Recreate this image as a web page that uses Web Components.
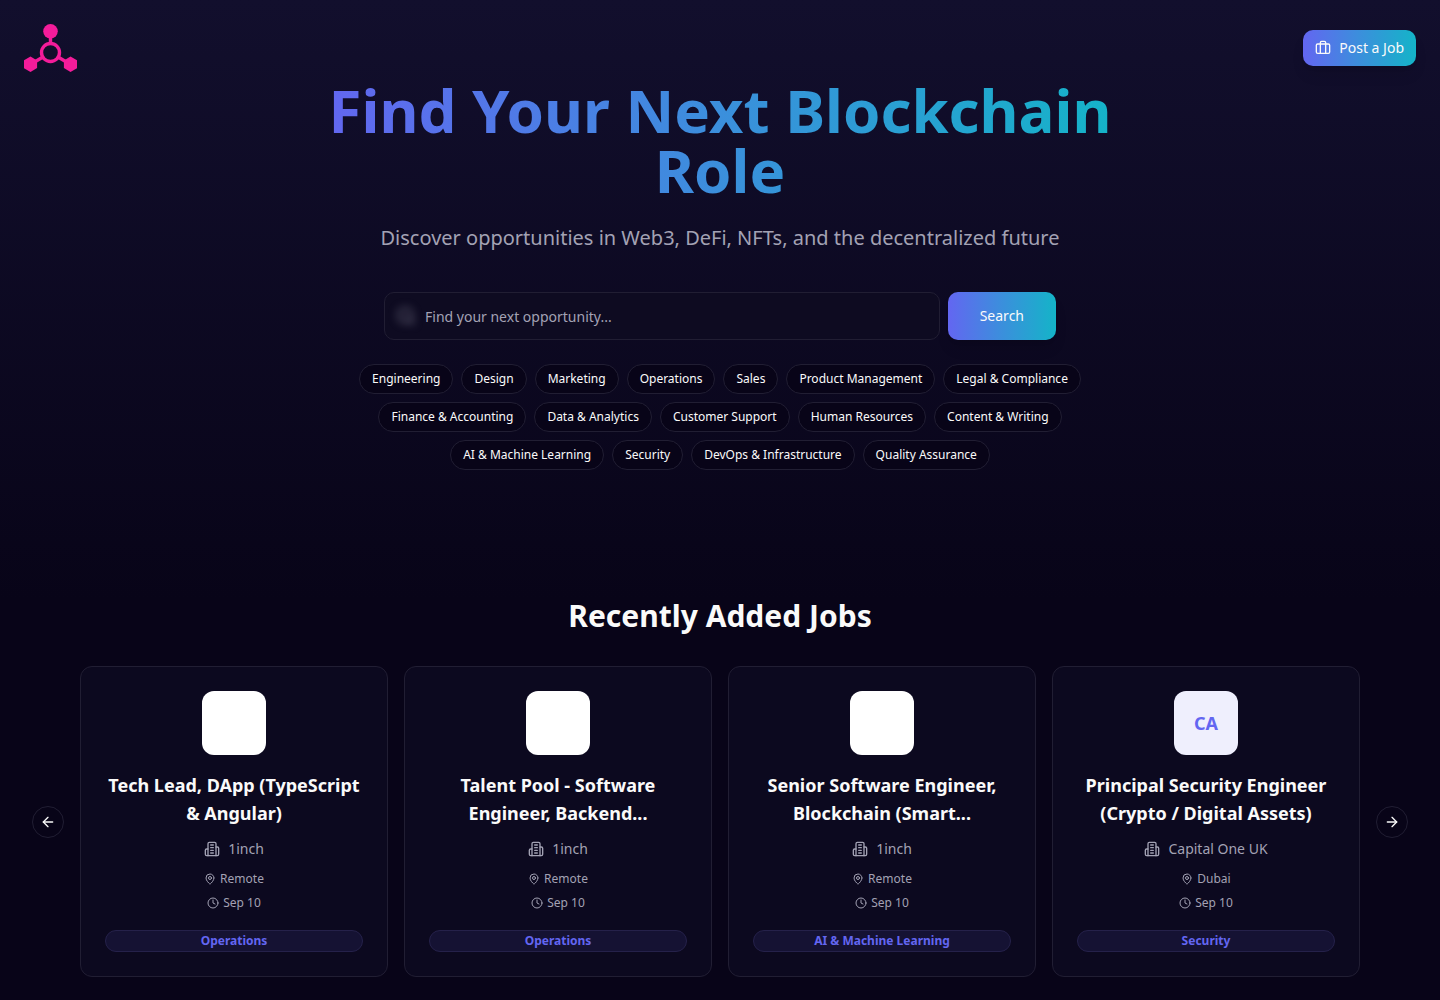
<!DOCTYPE html>
<html lang="en">
<head>
<meta charset="utf-8">
<meta name="viewport" content="width=device-width, initial-scale=1">
<title>Blockchain Jobs</title>
<style>
	:root {
		--bg: #080418;
		--bg-top: #120f2d;
		--card: #0c091f;
		--border: #211e33;
		--text: #fafafa;
		--muted: #a3a2b4;
		--primary: #6366f1;
		--gradient: linear-gradient(to right, #6366f1, #3b8fdc 50%, #14b4c8);
	}
	body {
		margin: 0;
		min-height: 100vh;
		color: var(--text);
		background: linear-gradient(to bottom, var(--bg-top), var(--bg) 600px) var(--bg);
		font-family: "Noto Sans", sans-serif;
		font-size: 14px;
		line-height: 20px;
	}
</style>
</head>
<body>
<site-header></site-header>
<main>
	<job-hero>
		<span slot="title">Find Your Next Blockchain Role</span>
		<span slot="subtitle">Discover opportunities in Web3, DeFi, NFTs, and the decentralized future</span>
		<job-search></job-search>
		<category-list></category-list>
	</job-hero>
	<job-carousel>
		<span slot="title">Recently Added Jobs</span>
		<job-card company="1inch" location="Remote" date="Sep 10" category="Operations">Tech Lead, DApp (TypeScript &amp; Angular)</job-card>
		<job-card company="1inch" location="Remote" date="Sep 10" category="Operations">Talent Pool - Software Engineer, Backend...</job-card>
		<job-card company="1inch" location="Remote" date="Sep 10" category="AI &amp; Machine Learning">Senior Software Engineer, Blockchain (Smart...</job-card>
		<job-card company="Capital One UK" location="Dubai" date="Sep 10" category="Security" initials="CA">Principal Security Engineer (Crypto / Digital Assets)</job-card>
	</job-carousel>
</main>

<script>
const icons = {
	briefcase: `<path d="M16 20V4a2 2 0 0 0-2-2h-4a2 2 0 0 0-2 2v16"/><rect width="20" height="14" x="2" y="6" rx="2"/>`,
	search: `<circle cx="11" cy="11" r="8"/><path d="m21 21-4.3-4.3"/>`,
	building: `<path d="M6 22V4a2 2 0 0 1 2-2h8a2 2 0 0 1 2 2v18Z"/><path d="M6 12H4a2 2 0 0 0-2 2v6a2 2 0 0 0 2 2h2"/><path d="M18 9h2a2 2 0 0 1 2 2v9a2 2 0 0 1-2 2h-2"/><path d="M10 6h4"/><path d="M10 10h4"/><path d="M10 14h4"/><path d="M10 18h4"/>`,
	pin: `<path d="M20 10c0 4.993-5.539 10.193-7.399 11.799a1 1 0 0 1-1.202 0C9.539 20.193 4 14.993 4 10a8 8 0 0 1 16 0"/><circle cx="12" cy="10" r="3"/>`,
	clock: `<circle cx="12" cy="12" r="10"/><path d="M12 6v6l4 2"/>`,
	left: `<path d="m12 19-7-7 7-7"/><path d="M19 12H5"/>`,
	right: `<path d="M5 12h14"/><path d="m12 5 7 7-7 7"/>`
};

customElements.define("line-icon",
	class extends HTMLElement {
		connectedCallback(){
			this.attachShadow({ mode: "open" }).innerHTML = `
				<style>
					:host { display: block; flex: none; width: 16px; height: 16px; }
					svg { display: block; width: 100%; height: 100%; }
				</style>
				<svg viewBox="0 0 24 24" fill="none" stroke="currentColor" stroke-width="2" stroke-linecap="round" stroke-linejoin="round" aria-hidden="true">${icons[this.getAttribute("name")]}</svg>
			`;
		}
	}
);

customElements.define("gradient-button",
	class extends HTMLElement {
		connectedCallback(){
			this.attachShadow({ mode: "open" }).innerHTML = `
				<style>
					:host { display: block; flex: none; }
					button {
						display: flex;
						align-items: center;
						gap: 8px;
						height: 36px;
						padding: 0 12px;
						border: 0;
						border-radius: 10px;
						background: var(--gradient);
						box-shadow: 0 10px 15px -3px #0000001a, 0 4px 6px -4px #0000001a;
						color: var(--text);
						font: 14px/20px "Noto Sans", sans-serif;
						cursor: pointer;
					}
					:host([size="large"]) button { height: 48px; padding: 0 32px; }
				</style>
				<button type="button"><slot></slot></button>
			`;
		}
	}
);

customElements.define("site-header",
	class extends HTMLElement {
		connectedCallback(){
			this.attachShadow({ mode: "open" }).innerHTML = `
				<style>
					:host { display: block; }
					header { display: flex; align-items: center; justify-content: space-between; padding: 24px 24px 0; }
					svg { display: block; }
				</style>
				<header>
					<a href="#" aria-label="Home">
						<svg width="53" height="48" viewBox="0 0 53 48" fill="#f41c9a" aria-hidden="true">
							<g fill="none" stroke="#f41c9a" stroke-width="3.4">
								<path d="M26.5 12v8M19 33 8 39.5M34 33l11 6.5"/>
								<circle cx="26.5" cy="28.5" r="9"/>
							</g>
							<circle cx="26.5" cy="7.3" r="7.3"/>
							<path d="m6.5 32.5 6.6 3.9v7.7l-6.6 3.9-6.6-3.9v-7.7z"/>
							<path d="m46.5 32.5 6.6 3.9v7.7l-6.6 3.9-6.6-3.9v-7.7z"/>
						</svg>
					</a>
					<gradient-button><line-icon name="briefcase"></line-icon>Post a Job</gradient-button>
				</header>
			`;
		}
	}
);

customElements.define("job-hero",
	class extends HTMLElement {
		connectedCallback(){
			this.attachShadow({ mode: "open" }).innerHTML = `
				<style>
					:host { display: block; padding: 8px 24px 128px; text-align: center; }
					section { max-width: 800px; margin: 0 auto; }
					h1 {
						margin: 0 0 24px;
						background: var(--gradient);
						-webkit-background-clip: text;
						background-clip: text;
						color: transparent;
						font-size: 60px;
						line-height: 60px;
						font-weight: 700;
					}
					p { margin: 0 0 40px; color: var(--muted); font-size: 20px; line-height: 28px; }
				</style>
				<section>
					<h1><slot name="title"></slot></h1>
					<p><slot name="subtitle"></slot></p>
					<slot></slot>
				</section>
			`;
		}
	}
);

customElements.define("job-search",
	class extends HTMLElement {
		connectedCallback(){
			this.attachShadow({ mode: "open" }).innerHTML = `
				<style>
					:host { display: block; max-width: 672px; margin: 0 auto 24px; }
					form { display: flex; gap: 8px; }
					label { position: relative; flex: 1; }
					line-icon {
						position: absolute;
						left: 12px;
						top: 14px;
						width: 20px;
						height: 20px;
						color: #7d7b8f;
						filter: blur(4px);
					}
					input {
						box-sizing: border-box;
						display: block;
						width: 100%;
						height: 48px;
						padding: 0 16px 0 40px;
						border: 1px solid var(--border);
						border-radius: 10px;
						background: #0e0b21;
						color: var(--text);
						font: 14px/20px "Noto Sans", sans-serif;
					}
					input::placeholder { color: var(--muted); opacity: 1; }
				</style>
				<form>
					<label>
						<input type="text" aria-label="Search jobs" placeholder="Find your next opportunity...">
						<line-icon name="search"></line-icon>
					</label>
					<gradient-button size="large">Search</gradient-button>
				</form>
			`;
		}
	}
);

customElements.define("category-list",
	class extends HTMLElement {
		connectedCallback(){
			const categories = [
				"Engineering", "Design", "Marketing", "Operations", "Sales", "Product Management",
				"Legal &amp; Compliance", "Finance &amp; Accounting", "Data &amp; Analytics",
				"Customer Support", "Human Resources", "Content &amp; Writing",
				"AI &amp; Machine Learning", "Security", "DevOps &amp; Infrastructure", "Quality Assurance"
			];
			this.attachShadow({ mode: "open" }).innerHTML = `
				<style>
					:host { display: flex; flex-wrap: wrap; justify-content: center; gap: 8px; }
					button {
						height: 30px;
						padding: 0 12px;
						border: 1px solid var(--border);
						border-radius: 15px;
						background: var(--bg);
						color: var(--text);
						font: 12px/16px "Noto Sans", sans-serif;
						cursor: pointer;
					}
				</style>
				${categories.map(name => `<button type="button">${name}</button>`).join("")}
			`;
		}
	}
);

customElements.define("job-carousel",
	class extends HTMLElement {
		connectedCallback(){
			this.attachShadow({ mode: "open" }).innerHTML = `
				<style>
					:host { display: block; padding: 0 32px 23px; }
					h2 { margin: 0 0 32px; font-size: 30px; line-height: 36px; font-weight: 700; text-align: center; }
					.row { display: flex; align-items: center; gap: 16px; }
					.track { flex: 1; display: grid; grid-template-columns: repeat(4, minmax(0, 1fr)); gap: 16px; }
					button {
						display: flex;
						align-items: center;
						justify-content: center;
						flex: none;
						width: 32px;
						height: 32px;
						padding: 0;
						border: 1px solid var(--border);
						border-radius: 50%;
						background: var(--bg);
						color: var(--text);
						cursor: pointer;
					}
				</style>
				<h2><slot name="title"></slot></h2>
				<div class="row">
					<button type="button" aria-label="Previous"><line-icon name="left"></line-icon></button>
					<div class="track"><slot></slot></div>
					<button type="button" aria-label="Next"><line-icon name="right"></line-icon></button>
				</div>
			`;
		}
	}
);

customElements.define("job-card",
	class extends HTMLElement {
		connectedCallback(){
			const initials = this.getAttribute("initials") || "";
			this.attachShadow({ mode: "open" }).innerHTML = `
				<style>
					:host {
						display: flex;
						flex-direction: column;
						align-items: center;
						padding: 24px;
						border: 1px solid var(--border);
						border-radius: 12px;
						background: var(--card);
						text-align: center;
					}
					.logo {
						display: grid;
						place-items: center;
						width: 64px;
						height: 64px;
						margin-bottom: 16px;
						border-radius: 12px;
						background: #fff;
						color: var(--primary);
						font-size: 18px;
						line-height: 28px;
						font-weight: 700;
					}
					.logo.initials { background: #efeffd; }
					h3 { margin: 0 0 12px; font-size: 18px; line-height: 28px; font-weight: 700; }
					.company { display: flex; align-items: center; gap: 8px; margin-bottom: 12px; color: var(--muted); }
					.meta { display: flex; align-items: center; gap: 4px; margin-bottom: 8px; color: var(--muted); font-size: 12px; line-height: 16px; }
					.meta line-icon { width: 12px; height: 12px; }
					.badge {
						align-self: stretch;
						margin-top: 11px;
						padding: 2px 10px;
						border: 1px solid #25214a;
						border-radius: 12px;
						background: #151233;
						color: var(--primary);
						font-size: 12px;
						line-height: 16px;
						font-weight: 700;
					}
				</style>
				<div class="logo ${initials && "initials"}">${initials}</div>
				<h3><slot></slot></h3>
				<div class="company"><line-icon name="building"></line-icon>${this.getAttribute("company")}</div>
				<div class="meta"><line-icon name="pin"></line-icon>${this.getAttribute("location")}</div>
				<div class="meta"><line-icon name="clock"></line-icon>${this.getAttribute("date")}</div>
				<div class="badge">${this.getAttribute("category").replace("&", "&amp;")}</div>
			`;
		}
	}
);
</script>
</body>
</html>
